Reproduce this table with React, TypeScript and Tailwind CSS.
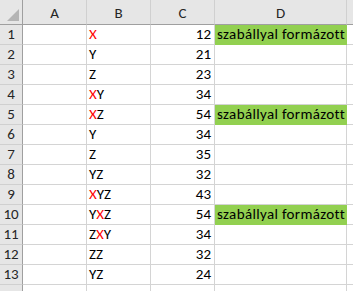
import React from "react";

type Seg = { t: string; red?: boolean };
const rows: { b: Seg[]; c: number; d: boolean }[] = [
  { b: [{ t: "X", red: true }], c: 12, d: true },
  { b: [{ t: "Y" }], c: 21, d: false },
  { b: [{ t: "Z" }], c: 23, d: false },
  { b: [{ t: "X", red: true }, { t: "Y" }], c: 34, d: false },
  { b: [{ t: "X", red: true }, { t: "Z" }], c: 54, d: true },
  { b: [{ t: "Y" }], c: 34, d: false },
  { b: [{ t: "Z" }], c: 35, d: false },
  { b: [{ t: "YZ" }], c: 32, d: false },
  { b: [{ t: "X", red: true }, { t: "YZ" }], c: 43, d: false },
  { b: [{ t: "Y" }, { t: "X", red: true }, { t: "Z" }], c: 54, d: true },
  { b: [{ t: "Z" }, { t: "X", red: true }, { t: "Y" }], c: 34, d: false },
  { b: [{ t: "ZZ" }], c: 32, d: false },
  { b: [{ t: "YZ" }], c: 24, d: false },
];

const font = { fontFamily: "Calibri, Carlito, Lato, 'Open Sans', sans-serif" };

export default function App() {
  return (
    <div className="w-[353px] h-[291px] overflow-hidden bg-white text-[15px] text-black" style={font}>
      <div className="grid grid-cols-[23px_64px_64px_64px_132px_6px] auto-rows-[20px] [grid-template-rows:25px]">
        {/* header row */}
        <div className="h-[25px] bg-[#e6e6e6] border-r border-b border-[#9f9f9f] relative">
          <svg width="23" height="25" className="absolute left-0 top-0">
            <polygon points="19,9 19,21 7,21" fill="#b4b4b4" />
          </svg>
        </div>
        {["A", "B", "C", "D"].map((l) => (
          <div
            key={l}
            className="h-[25px] bg-[#e6e6e6] border-r border-r-[#d0d0d0] border-b border-b-[#9f9f9f] flex items-center justify-center text-[#262626] pt-[2px]"
          >
            {l}
          </div>
        ))}
        <div className="h-[25px] bg-[#e6e6e6] border-b border-b-[#9f9f9f]" />
        {rows.map((r, i) => (
          <React.Fragment key={i}>
            <div className="h-[20px] bg-[#e6e6e6] border-r border-r-[#9f9f9f] border-b border-b-[#d0d0d0] flex items-end justify-center text-[#262626] leading-[19px]">
              {i + 1}
            </div>
            <div className="h-[20px] border-r border-b border-[#d4d4d4]" />
            <div className="h-[20px] border-r border-b border-[#d4d4d4] flex items-end pl-[2px] leading-[19px]">
              {r.b.map((s, j) => (
                <span key={j} className={s.red ? "text-[#ff0000]" : ""}>
                  {s.t}
                </span>
              ))}
            </div>
            <div className="h-[20px] border-r border-b border-[#d4d4d4] flex items-end justify-end pr-[3px] leading-[19px]">
              {r.c}
            </div>
            <div
              className={
                r.d
                  ? "h-[20px] bg-[#92d050] border-r border-b border-[#92d050] flex items-end pl-[2px] leading-[19px] whitespace-nowrap tracking-[0.35px]"
                  : "h-[20px] border-r border-b border-[#d4d4d4]"
              }
            >
              {r.d ? "szabállyal formázott" : ""}
            </div>
            <div className="h-[20px] border-b border-[#d4d4d4]" />
          </React.Fragment>
        ))}
        <div className="h-[20px] bg-[#e6e6e6] border-r border-r-[#9f9f9f]" />
        <div className="h-[20px] border-r border-[#d4d4d4]" />
        <div className="h-[20px] border-r border-[#d4d4d4]" />
        <div className="h-[20px] border-r border-[#d4d4d4]" />
        <div className="h-[20px] border-r border-[#d4d4d4]" />
        <div className="h-[20px]" />
      </div>
    </div>
  );
}
